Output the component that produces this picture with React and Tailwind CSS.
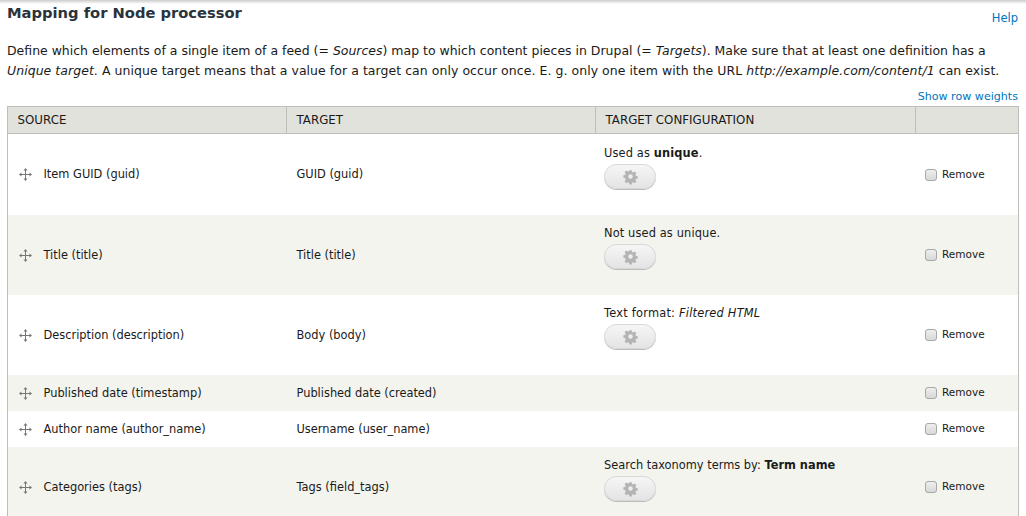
const rows = [
  { source: 'Item GUID (guid)', target: 'GUID (guid)', config: <>Used as <b>unique</b>.</>, spacing: 'tracking-[0.13px]', button: true, h: 'h-[81px]' },
  { source: 'Title (title)', target: 'Title (title)', config: <>Not used as unique.</>, spacing: 'tracking-[0.13px]', button: true, alt: true, h: 'h-[80px]' },
  { source: 'Description (description)', target: 'Body (body)', config: <>Text format: <em>Filtered HTML</em></>, spacing: 'tracking-[0.22px]', button: true, h: 'h-[80px]' },
  { source: 'Published date (timestamp)', target: 'Published date (created)', alt: true, h: 'h-[36px]' },
  { source: 'Author name (author_name)', target: 'Username (user_name)', h: 'h-[36px]' },
  { source: 'Categories (tags)', target: 'Tags (field_tags)', config: <>Search taxonomy terms by: <b>Term name</b></>, button: true, alt: true, h: 'h-[80px]' },
];

const DragHandle = () => (
  <svg width="13" height="13" viewBox="0 0 13 13" className="shrink-0 text-[#777]" fill="currentColor">
    <rect x="6" y="1.5" width="1" height="10" />
    <rect x="1.5" y="6" width="10" height="1" />
    <path d="M6.5 0 8.5 2.5h-4zM6.5 13l2-2.5h-4zM0 6.5 2.5 4.5v4zM13 6.5l-2.500-2v4z" />
  </svg>
);

const Gear = () => (
  <svg width="17" height="17" viewBox="0 0 16 16" className="text-[#b4b4b4]" fill="currentColor">
    <path
      fillRule="evenodd"
      d="M6.700 1h2.600l.4 2 1.300.55 1.700-1.150 1.850 1.850-1.150 1.700.55 1.300 2 .4v2.600l-2 .4-.55 1.300 1.150 1.700-1.850 1.850-1.700-1.150-1.300.55-.4 2H6.700l-.4-2-1.300-.55-1.700 1.150-1.850-1.850 1.150-1.700L2.050 9.700l-2-.4V6.700l2-.4.55-1.300-1.150-1.700L3.300 1.450 5 2.600l1.300-.55zM8 5.500a2.500 2.500 0 1 0 0 5 2.500 2.500 0 0 0 0-5z"
      transform="translate(1.200 1.200) scale(.85)"
    />
  </svg>
);

const App = () => {
  return (
    <div className="relative h-[516px] w-[1026px] overflow-hidden bg-white font-['DejaVu_Sans',sans-serif] text-[11.4px] text-[#1a1a1a]">
      <div className="absolute inset-x-0 top-0 h-1 bg-gradient-to-b from-[#ccc] to-white" />
      <div className="px-[7px]">
        <div className="flex items-start justify-between pt-[3px] pr-px">
          <h2 className="text-[14.700px] leading-5 font-bold text-[#2a333c]">Mapping for Node processor</h2>
          <a className="mt-[7px] text-[11.500px] text-[#0074bd]">Help</a>
        </div>
        <p className="mt-[14px] text-[12.470px] leading-5 whitespace-nowrap">
          Define which elements of a single item of a feed (= <em>Sources</em>) map to which content pieces in Drupal (= <em>Targets</em>). Make sure that at least one definition has a
          <br />
          <span className="tracking-[0.06px]">
            <em>Unique target</em>. A unique target means that a value for a target can only occur once. E. g. only one item with the URL <em>http://example.com/content/1</em> can exist.
          </span>
        </p>
        <div className="mt-[6px] h-[19px] pr-px text-right text-[11.100px] leading-5 text-[#0074bd]">Show row weights</div>
        <table className="w-[1011px] table-fixed border-collapse">
          <colgroup>
            <col className="w-[279px]" />
            <col className="w-[309px]" />
            <col className="w-[320px]" />
            <col className="w-[103px]" />
          </colgroup>
          <thead>
            <tr className="h-[27px] bg-[#e1e2dc] text-left text-[11.850px]">
              {['SOURCE', 'TARGET', 'TARGET CONFIGURATION', ''].map((label, i) => (
                <th key={i} className="border border-[#bebfb9] pt-[2px] pr-[10px] pl-[9.500px] font-normal">{label}</th>
              ))}
            </tr>
          </thead>
          <tbody>
            {rows.map((row) => (
              <tr key={row.source} className={`${row.h} ${row.alt ? 'bg-[#f3f4ee]' : 'bg-white'}`}>
                <td className="border-l border-[#bebfb9] pt-px pr-[10px] pl-[9.500px]">
                  <div className="flex items-center gap-[12px] pl-px">
                    <DragHandle />
                    <span>{row.source}</span>
                  </div>
                </td>
                <td className="pt-px pl-[10px]">{row.target}</td>
                <td className="px-[8.500px]">
                  <div className={row.button ? 'pb-[16px]' : ''}>
                    {row.config && <div className={`leading-4 ${row.spacing || ''}`}>{row.config}</div>}
                    {row.button && (
                      <div className="mt-[3px] flex h-[25px] w-[52px] items-center justify-center rounded-[13px] border border-[#d8d8d8] bg-gradient-to-b from-[#f6f6f6] to-[#e4e4e4] shadow-[0_1px_0_#bbb]">
                        <Gear />
                      </div>
                    )}
                  </div>
                </td>
                <td className="border-r border-[#bebfb9] pt-px pl-[9.500px]">
                  <label className="flex items-center gap-[5px] text-[10.500px]">
                    <span className="h-[12px] w-[12px] rounded-[3px] border border-[#a8a8a8] bg-gradient-to-b from-[#eee] to-[#d8d8d8]" />
                    Remove
                  </label>
                </td>
              </tr>
            ))}
          </tbody>
        </table>
      </div>
    </div>
  );
};

export default App;
